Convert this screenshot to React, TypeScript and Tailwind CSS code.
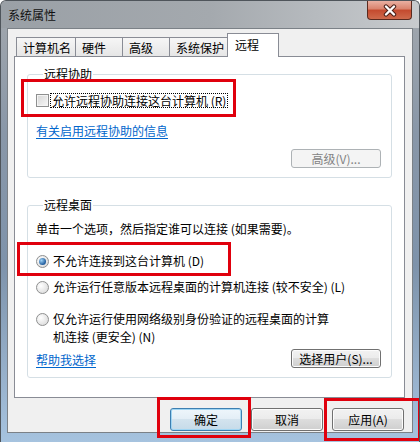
import type { ReactNode } from "react";

// Windows 7 "系统属性" dialog, 远程 tab, with red annotation boxes.

function Button({ children, wide, primary, disabled }: { children: ReactNode; wide?: boolean; primary?: boolean; disabled?: boolean }) {
  const base = "flex items-center justify-center rounded-[3px] border text-[12px] leading-[14px]";
  const size = wide ? "h-[19px] w-[90px]" : "h-[23px] w-[72px]";
  let look = "border-[#707070] bg-[linear-gradient(#f2f2f2_0%,#ebebeb_49%,#dddddd_50%,#cfcfcf_100%)] shadow-[inset_0_0_0_1px_#fcfcfc] text-black";
  if (primary) look = "border-[#3c7fb1] bg-[linear-gradient(#eef6fb_0%,#e3eef6_49%,#d3e3ee_50%,#c6dbe9_100%)] shadow-[inset_0_0_0_1px_#9fd5f3] text-black";
  if (disabled) look = "border-[#adb2b5] bg-[#f4f4f4] text-[#838383]";
  return <div className={`${base} ${size} ${look}`}>{children}</div>;
}

function Radio({ checked }: { checked?: boolean }) {
  return (
    <span className="flex h-[13px] w-[13px] shrink-0 items-center justify-center rounded-full border border-[#8e8f8f] bg-[radial-gradient(circle_at_35%_35%,#ffffff,#d4d4d4)]">
      {checked && <span className="h-[7px] w-[7px] rounded-full bg-[radial-gradient(circle_at_35%_35%,#9fd3f7,#1f5b9c_70%)]" />}
    </span>
  );
}

function Red({ className }: { className: string }) {
  return <div className={`pointer-events-none absolute border-[3px] border-[#e0000d] ${className}`} />;
}

export default function App() {
  const tabs = [
    { label: "计算机名", w: "w-[60px]" },
    { label: "硬件", w: "w-[48px]" },
    { label: "高级", w: "w-[48px]" },
    { label: "系统保护", w: "w-[60px]" },
  ];

  return (
    <div className="relative h-[442px] w-[420px] overflow-hidden rounded-t-[6px] border-x border-t border-[#4f555b] bg-[linear-gradient(180deg,#a3a8ad_0%,#8997a8_30%,#7e93ab_60%,#a6c3df_100%)] font-['Noto_Sans_CJK_SC',sans-serif] text-black">
      {/* title bar */}
      <div className="flex h-[27px] items-start justify-between bg-[linear-gradient(90deg,#9aa0a6_0%,#a4a9ae_50%,#c8cbce_100%)]">
        <span className="pl-[7px] pt-[7px] text-[12px] leading-[14px] text-[#111]">系统属性</span>
        <div className="mr-[7px] flex h-[19px] w-[45px] items-center justify-center rounded-b-[4px] border border-t-0 border-[#5a2a1f] bg-[linear-gradient(#eab0a2_0%,#d9826c_45%,#c44a2e_50%,#cf6a4c_100%)]">
          <svg width="16" height="13" viewBox="0 0 16 13">
            <path d="M4 2.5 L12 10.5 M12 2.5 L4 10.5" stroke="#4a2018" strokeWidth="4.4" strokeLinecap="round" />
            <path d="M4 2.5 L12 10.5 M12 2.5 L4 10.5" stroke="#ffffff" strokeWidth="2.4" strokeLinecap="round" />
          </svg>
        </div>
      </div>

      {/* client area */}
      <div className="mx-[6px] h-[405px] border border-[#7b8187] bg-[#f0f0f0]">
        {/* tabs */}
        <div className="relative z-10 -mb-px ml-[8px] mt-[4px] flex h-[24px] items-end">
          {tabs.map((t, i) => (
            <div
              key={t.label}
              className={`mb-px flex h-[19px] ${t.w} ${i > 0 ? "-ml-px" : ""} items-center border-x border-t border-[#898c95] bg-[linear-gradient(#f6f6f6,#e6e6e6)] pl-[6px] pt-[2px] text-[12px] leading-[14px]`}
            >
              {t.label}
            </div>
          ))}
          <div className="-ml-[2px] flex h-[24px] w-[52px] items-start border-x border-t border-[#898c95] bg-white pl-[7px] pt-[4px] text-[12px] leading-[14px]">
            远程
          </div>
        </div>

        {/* tab panel */}
        <div className="ml-[6px] h-[342px] w-[391px] border border-[#898c95] bg-white px-[12px] pt-[10px] text-[12px] leading-[14px]">
          <fieldset className="rounded-[3px] border border-[#d5dfe5] px-[8px] pb-[9px]">
            <legend className="ml-[7px] px-[1px] leading-[14px]">远程协助</legend>
            <div className="mt-[11px] flex h-[16px] items-center">
              <span className="h-[13px] w-[13px] shrink-0 border border-[#8e8f8f] bg-[linear-gradient(135deg,#d6d6d6,#f7f7f7)] shadow-[inset_0_0_0_1px_#f4f4f4]" />
              <span className="ml-[1px] border border-dotted border-black px-[1px] leading-[13px]">允许远程协助连接这台计算机 (R)</span>
            </div>
            <div className="mt-[16px] text-[#0066cc] underline underline-offset-2">有关启用远程协助的信息</div>
            <div className="mt-[11px] flex justify-end pr-[2px]">
              <Button wide disabled>高级(V)...</Button>
            </div>
          </fieldset>

          <fieldset className="mt-[20px] rounded-[3px] border border-[#d5dfe5] px-[8px] pb-[9px]">
            <legend className="ml-[7px] px-[1px] leading-[14px]">远程桌面</legend>
            <div className="mt-[10px]">单击一个选项，然后指定谁可以连接 (如果需要)。</div>
            <div className="mt-[17px] flex h-[16px] items-center gap-[4px]">
              <Radio checked />
              <span>不允许连接到这台计算机 (D)</span>
            </div>
            <div className="mt-[10px] flex h-[16px] items-center gap-[4px]">
              <Radio />
              <span>允许运行任意版本远程桌面的计算机连接 (较不安全) (L)</span>
            </div>
            <div className="mt-[15px] flex items-start gap-[4px]">
              <span className="pt-[3px]">
                <Radio />
              </span>
              <span className="leading-[18px]">
                仅允许运行使用网络级别身份验证的远程桌面的计算
                <br />
                机连接 (更安全) (N)
              </span>
            </div>
            <div className="mt-[3px] flex items-center justify-between pr-[2px]">
              <span className="pt-[2px] text-[#0066cc] underline underline-offset-2">帮助我选择</span>
              <Button wide>选择用户(S)...</Button>
            </div>
          </fieldset>
        </div>

        {/* dialog buttons */}
        <div className="mr-[8px] mt-[10px] flex justify-end gap-[9px]">
          <Button primary>确定</Button>
          <Button>取消</Button>
          <Button>应用(A)</Button>
        </div>
      </div>

      {/* annotation boxes */}
      <Red className="left-[20px] top-[78px] h-[38px] w-[215px]" />
      <Red className="left-[16px] top-[241px] h-[34px] w-[214px]" />
      <Red className="left-[156px] top-[396px] h-[41px] w-[94px]" />
      <Red className="left-[323px] top-[397px] h-[43px] w-[97px]" />
    </div>
  );
}
